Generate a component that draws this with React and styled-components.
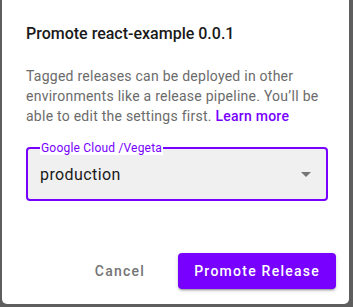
import React, { useState } from "react";
import styled, { createGlobalStyle } from "styled-components";

const GlobalStyle = createGlobalStyle`
  html, body {
    margin: 0;
    padding: 0;
    background: #5e5e5e;
    font-family: Roboto, "Liberation Sans", Arial, sans-serif;
  }
`;

const Page = styled.div`
  width: 353px;
  height: 307px;
  padding-left: 2px;
  box-sizing: border-box;
`;

const Dialog = styled.div`
  width: 347px;
  height: 304px;
  background: #fff;
  border-radius: 0 0 5px 5px;
  box-sizing: border-box;
  padding: 23px 0 0 24px;
  display: flex;
  flex-direction: column;
`;

const Title = styled.h2`
  margin: 0;
  font-size: 16px;
  line-height: 22px;
  font-weight: 500;
  color: #1a1a1a;
`;

const Body = styled.p`
  margin: 21px 0 0;
  width: 302px;
  font-size: 14px;
  line-height: 20px;
  letter-spacing: 0.25px;
  color: #6b6b6b;
`;

const Link = styled.span`
  color: #7700ff;
  font-weight: 500;
`;

const Field = styled.div`
  position: relative;
  margin-top: 21px;
  width: 302px;
  height: 54px;
  box-sizing: border-box;
  border: 2px solid #7700ff;
  border-radius: 4px;
  background: #f0f0f0;
  display: flex;
  align-items: center;
  padding: 0 15px 0 12px;
`;

const Label = styled.span`
  position: absolute;
  left: 12px;
  top: -8px;
  padding: 0 1px;
  background: #fff;
  font-size: 12px;
  line-height: 14px;
  letter-spacing: 0.2px;
  color: #7700ff;
`;

const Value = styled.span`
  flex: 1;
  font-size: 16px;
  letter-spacing: 0.4px;
  color: #1a1a1a;
`;

const Actions = styled.div`
  margin-top: auto;
  margin-bottom: 15px;
  display: flex;
  justify-content: flex-end;
  align-items: center;
  gap: 17px;
  padding-right: 13px;
`;

const Button = styled.button`
  height: 36px;
  border: 0;
  border-radius: 4px;
  font-family: inherit;
  font-size: 14px;
  font-weight: 500;
  letter-spacing: 1.25px;
  cursor: pointer;
  padding: 0 16px;
  background: ${props => (props.primary ? "#7700ff" : "transparent")};
  color: ${props => (props.primary ? "#fff" : "#757575")};
  box-shadow: ${props =>
    props.primary
      ? "0 3px 1px -2px rgba(0,0,0,0.2), 0 2px 2px 0 rgba(0,0,0,0.14), 0 1px 5px 0 rgba(0,0,0,0.12)"
      : "none"};
`;

export default function App() {
  const [env] = useState("production");
  return (
    <Page>
      <GlobalStyle />
      <Dialog>
        <Title>Promote react-example 0.0.1</Title>
        <Body>
          Tagged releases can be deployed in other environments like a release
          pipeline. You’ll be able to edit the settings first.{" "}
          <Link>Learn more</Link>
        </Body>
        <Field>
          <Label>Google Cloud /Vegeta</Label>
          <Value>{env}</Value>
          <svg width="10" height="5" viewBox="0 0 10 5">
            <path d="M0 0 L5 5 L10 0 Z" fill="#757575" />
          </svg>
        </Field>
        <Actions>
          <Button>Cancel</Button>
          <Button primary>Promote Release</Button>
        </Actions>
      </Dialog>
    </Page>
  );
}
